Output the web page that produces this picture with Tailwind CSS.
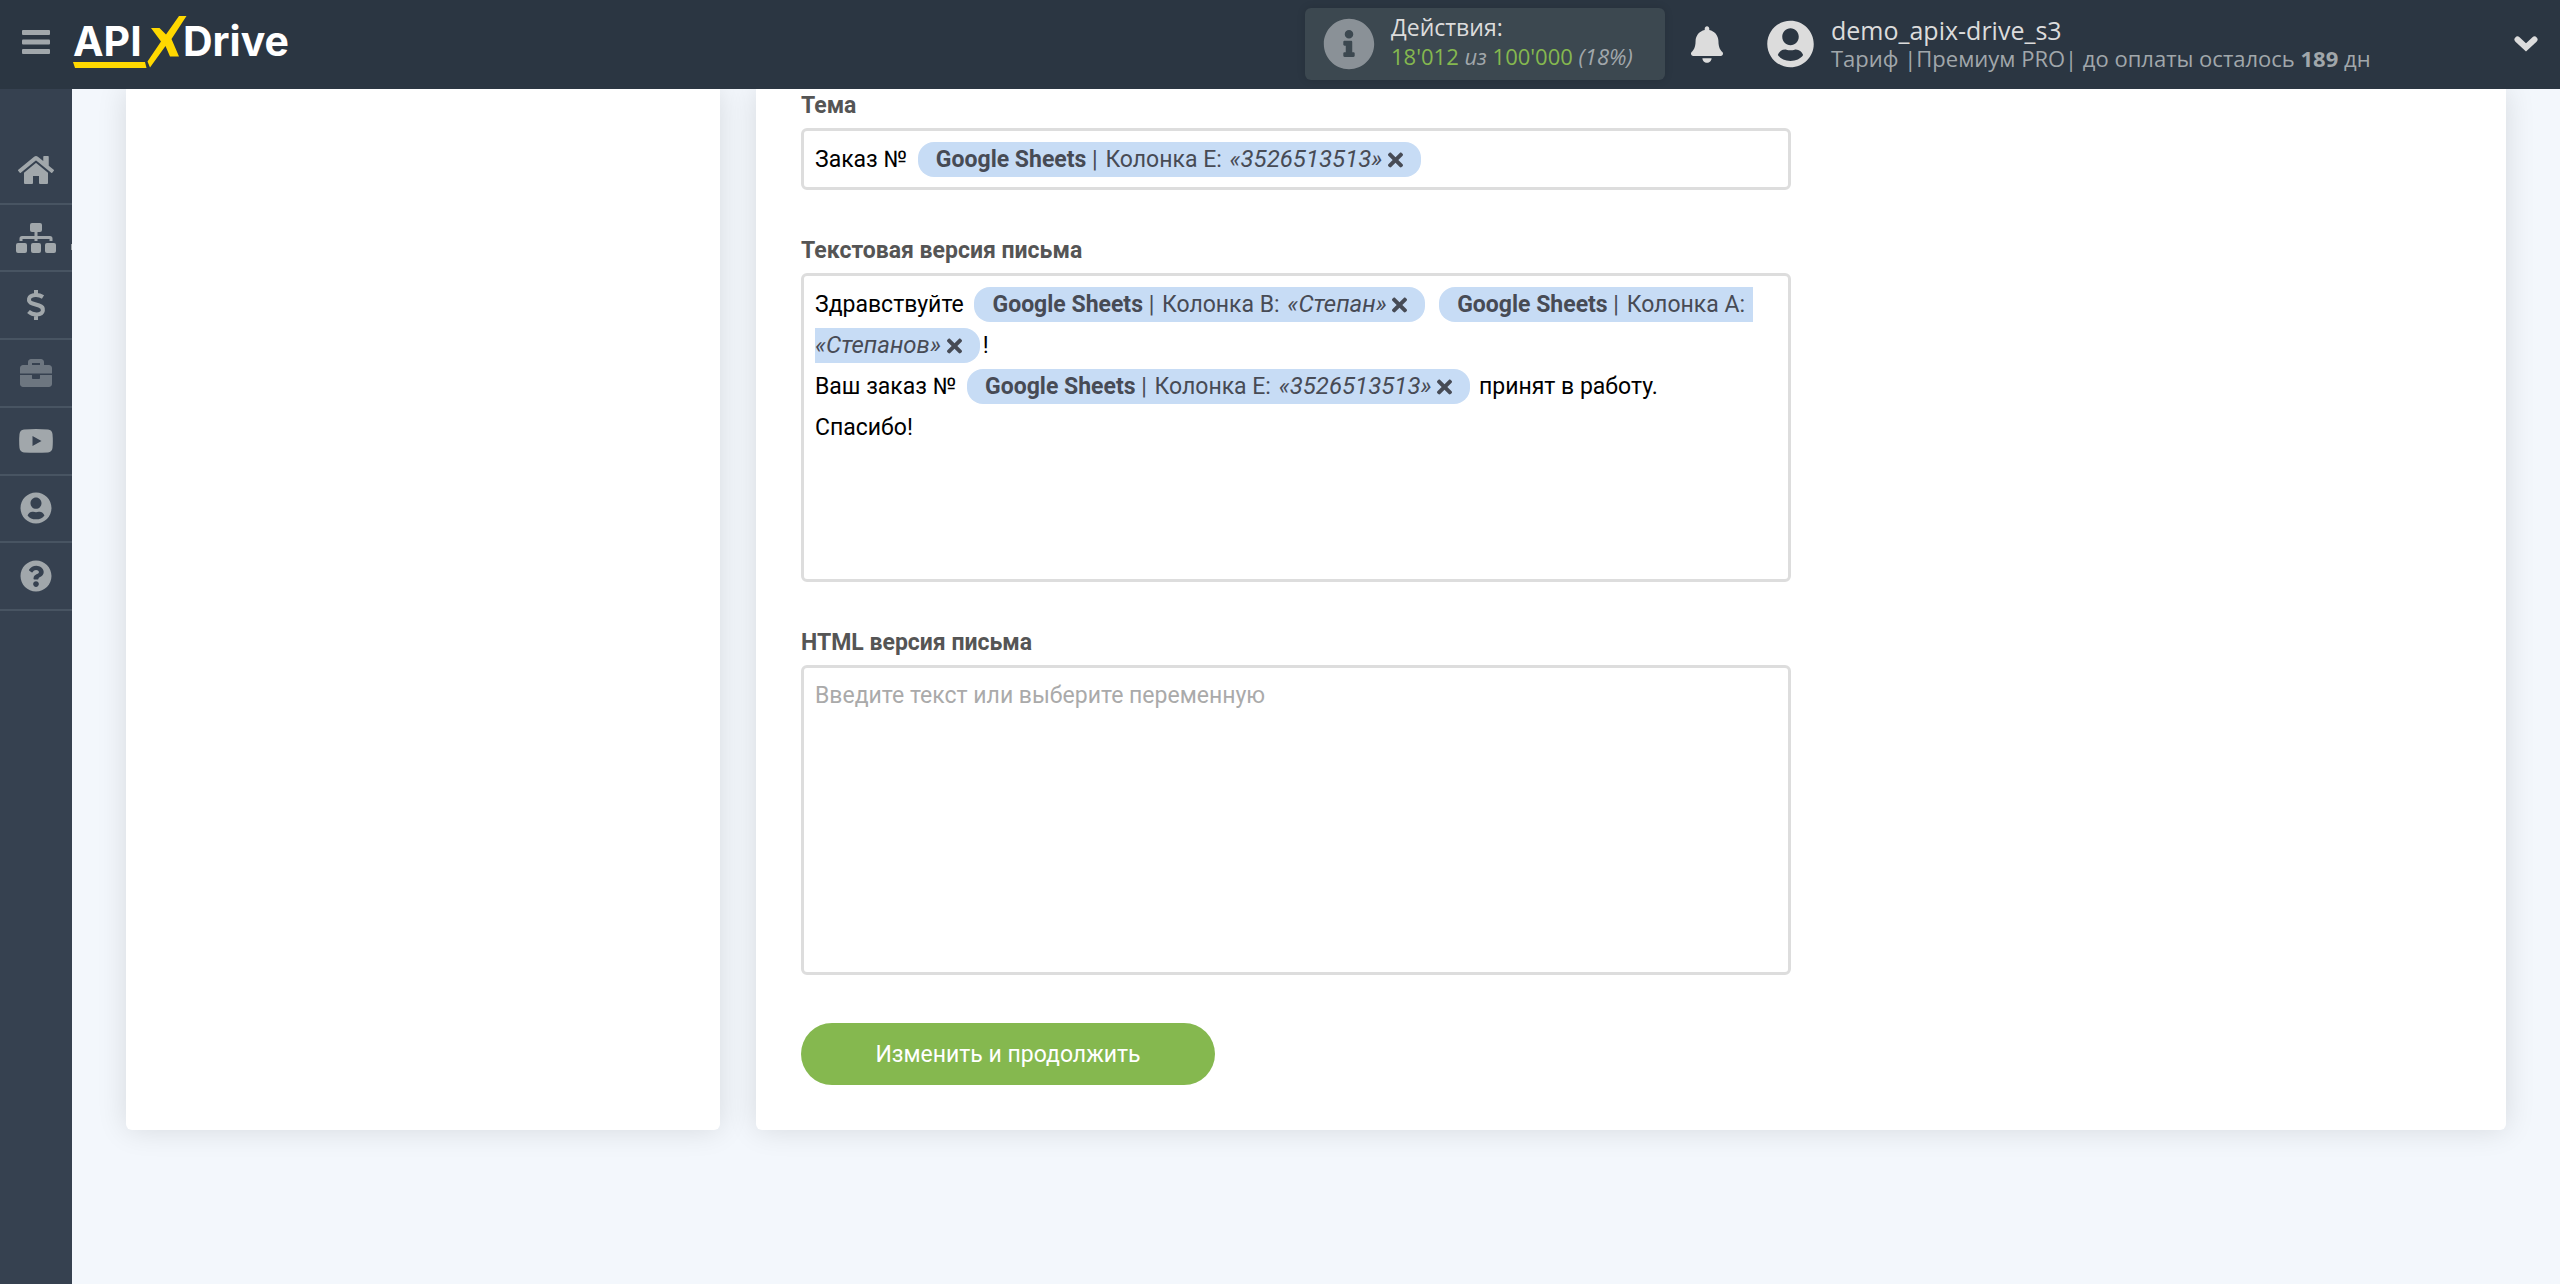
<!DOCTYPE html>
<html lang="ru">
<head>
<meta charset="utf-8">
<meta name="viewport" content="width=device-width, initial-scale=1">
<title>ApiX-Drive</title>
<script src="https://cdn.jsdelivr.net/npm/@tailwindcss/browser@4"></script>
</head>
<body class="flex min-h-screen flex-col bg-[#f3f7fc] font-[Roboto,sans-serif] text-[23px] text-black">

<!-- Icon sprite -->
<svg class="hidden" aria-hidden="true">
  <symbol id="times" viewBox="0 0 352 512"><path d="M242.72 256l100.07-100.07c12.28-12.28 12.28-32.19 0-44.48l-22.24-22.24c-12.28-12.28-32.19-12.28-44.48 0L176 189.28 75.93 89.21c-12.28-12.28-32.19-12.28-44.48 0L9.21 111.45c-12.28 12.28-12.28 32.19 0 44.48L109.28 256 9.21 356.07c-12.28 12.28-12.28 32.19 0 44.48l22.24 22.24c12.28 12.28 32.2 12.28 44.48 0L176 322.72l100.07 100.07c12.28 12.28 32.2 12.28 44.48 0l22.24-22.24c12.28-12.28 12.28-32.19 0-44.48L242.72 256z"/></symbol>
  <symbol id="user" viewBox="0 0 496 512"><path d="M248 8C111 8 0 119 0 256s111 248 248 248 248-111 248-248S385 8 248 8zm0 80c48.600 0 88 41.400 88 90s-39.400 90-88 90-88-41.400-88-90 39.400-90 88-90zm0 348c-58.700 0-106-20-135-62 14-38 42-60 78-60 5 0 10 1 14 2 13 4.200 28.700 6 43 6s30-1.800 43-6c4-1 9-2 14-2 36 0 64 22 78 60-29 42-76.300 62-135 62z"/></symbol>
</svg>

<header class="z-10 flex h-[89px] shrink-0 items-center bg-[#2b3642] pb-px font-['Open_Sans','Noto_Sans',sans-serif]">
  <button class="flex w-[72px] shrink-0 justify-center pb-1" aria-label="Меню">
    <svg class="h-6 w-7 fill-[#a1a7ab]" viewBox="0 0 28 24"><rect width="28" height="5" rx="1"/><rect y="9.500" width="28" height="5" rx="1"/><rect y="19" width="28" height="5" rx="1"/></svg>
  </button>
  <a href="#" class="shrink-0" aria-label="APIXDrive">
    <svg class="h-[88px] w-[224px]" viewBox="72 0 224 88">
      <g class="fill-white font-[Inter,sans-serif] text-[41px] font-bold"><text x="73" y="56">API</text><text x="183" y="56">Drive</text></g>
      <g class="fill-[#ffd800]"><path d="M73 62H145L146.500 68H75Z"/><path d="M179 16H186.500L171.500 39L179 56.500H170L165.500 46L150 67.500L147.500 61.500L161 41.500L151 28H159.500L166 34.500Z"/></g>
    </svg>
  </a>

  <div class="ml-auto flex h-[72px] w-[360px] shrink-0 items-center rounded-md bg-[#3c4850] pl-[18px] shadow-[0_0_8px_rgba(0,0,0,0.12)]">
    <svg class="size-[52px] fill-[#8a9197]" viewBox="0 0 512 512"><path d="M256 8C119.043 8 8 119.083 8 256c0 136.997 111.043 248 248 248s248-111.003 248-248C504 119.083 392.957 8 256 8zm0 110c23.196 0 42 18.804 42 42s-18.804 42-42 42-42-18.804-42-42 18.804-42 42-42zm56 254c0 6.627-5.373 12-12 12h-88c-6.627 0-12-5.373-12-12v-24c0-6.627 5.373-12 12-12h12v-64h-12c-6.627 0-12-5.373-12-12v-24c0-6.627 5.373-12 12-12h64c6.627 0 12 5.373 12 12v100h12c6.627 0 12 5.373 12 12v24z"/></svg>
    <div class="ml-4 pb-1 leading-[29px]">
      <div class="text-[23px] text-[#dcdcdc]">Действия:</div>
      <div class="text-[22px] whitespace-nowrap text-[#a1a7ab]"><span class="text-[#85b84f]">18'012</span> <i>из</i> <span class="text-[#85b84f]">100'000</span> <i>(18%)</i></div>
    </div>
  </div>

  <button class="ml-[26px] shrink-0" aria-label="Уведомления">
    <svg class="h-[37px] w-8 fill-[#dcdcdc]" viewBox="0 0 448 512"><path d="M224 512c35.320 0 63.970-28.650 63.970-64H160.030c0 35.350 28.650 64 63.970 64zm215.390-149.710c-19.320-20.760-55.470-51.990-55.470-154.290 0-77.700-54.480-139.900-127.940-155.160V32c0-17.670-14.320-32-31.980-32s-31.980 14.330-31.980 32v20.840C118.560 68.100 64.080 130.300 64.080 208c0 102.300-36.150 133.530-55.470 154.290-6 6.450-8.660 14.160-8.610 21.710.11 16.400 12.980 32 32.100 32h383.800c19.120 0 32-15.600 32.100-32 .05-7.550-2.610-15.270-8.610-21.710z"/></svg>
  </button>

  <button class="ml-11 flex w-[793px] shrink-0 items-center pr-[22px] text-left">
    <svg class="h-12 w-[47px] fill-[#dcdcdc]"><use href="#user"/></svg>
    <span class="ml-[17px] block whitespace-nowrap">
      <span class="block text-[25px] leading-7 text-[#dcdcdc]">demo_apix-drive_s3</span>
      <span class="block text-[22px] leading-7 text-[#a1a7ab]">Тариф |Премиум PRO| до оплаты осталось <b>189</b> дн</span>
    </span>
    <svg class="ml-auto h-4 w-6" viewBox="0 0 24 16" fill="none" stroke="#dcdcdc" stroke-width="6" stroke-linecap="round"><path d="M3.500 3.500L12 11.500L20.500 3.500"/></svg>
  </button>
</header>

<div class="flex flex-1">
  <nav class="relative w-[72px] shrink-0 bg-[#364150] pt-12" aria-label="Разделы">
    <ul class="grid h-[474px] auto-rows-fr fill-[#a1a7ab] *:border-b-2 *:border-[#485462]">
      <li><a href="#" class="flex h-full items-center justify-center" aria-label="Главная"><svg class="h-8 w-9" viewBox="0 0 576 512"><path d="M280.370 148.260L96 300.110V464a16 16 0 0 0 16 16h112a16 16 0 0 0 16-16V352h96v112a16 16 0 0 0 16 16h112a16 16 0 0 0 16-16V300L295.670 148.260a12.190 12.190 0 0 0-15.300 0zM571.600 251.470L492 186V44a12 12 0 0 0-12-12h-64a12 12 0 0 0-12 12v68L318.470 43a48 48 0 0 0-61 0L4.340 251.470a12 12 0 0 0-1.600 16.900l25.500 31A12 12 0 0 0 45.150 301l235.220-193.740a12.190 12.190 0 0 1 15.300 0L530.900 301a12 12 0 0 0 16.900-1.600l25.500-31a12 12 0 0 0-1.700-16.930z"/></svg></a></li>
      <li><a href="#" class="flex h-full items-center justify-center" aria-label="Связи"><svg class="h-8 w-10" viewBox="0 0 40 32"><rect x="14" y="1" width="12" height="9" rx="2"/><rect x="0" y="21" width="11" height="10" rx="2"/><rect x="15" y="21" width="10" height="10" rx="2"/><rect x="29" y="21" width="11" height="10" rx="2"/><path d="M18.500 9H21.500V14H34Q36.500 14 36.500 16.500V19H33.500V17H21.500V19H18.500V17H6.500V19H3.500V16.500Q3.500 14 6 14H18.500Z"/></svg></a></li>
      <li><a href="#" class="flex h-full items-center justify-center" aria-label="Оплата"><svg class="h-8 w-5" viewBox="0 0 20 32" fill="none" stroke="#a1a7ab" stroke-width="4"><path d="M17 8Q13.500 5.800 9.500 6C1.800 6.300 1 13 6.500 14.500L13 16.500C19 18.500 18 25 11 25.500Q6 25.700 2.500 22.500M10 1V7M10 25V31"/></svg></a></li>
      <li><a href="#" class="flex h-full items-center justify-center fill-[#6d7680]" aria-label="Проекты"><svg class="h-8 w-8" viewBox="0 0 512 512"><path d="M320 336c0 8.840-7.160 16-16 16h-96c-8.840 0-16-7.160-16-16v-48H0v144c0 25.600 22.400 48 48 48h416c25.600 0 48-22.400 48-48V288H320v48zm144-208h-80V80c0-25.600-22.400-48-48-48H176c-25.600 0-48 22.400-48 48v48H48c-25.600 0-48 22.400-48 48v88h512v-88c0-25.600-22.400-48-48-48zm-144 0H192V96h128v32z"/></svg></a></li>
      <li><a href="#" class="flex h-full items-center justify-center" aria-label="Видео"><svg class="h-6 w-[34px]" viewBox="0 0 34 24"><path fill-rule="evenodd" d="M5 .6Q17-.4 29 .6Q33 1 33.500 5Q34.200 12 33.500 19Q33 23 29 23.400Q17 24.300 5 23.400Q1 23 .5 19Q-.2 12 .5 5Q1 1 5 .6ZM13.500 7V17L22.500 12Z"/></svg></a></li>
      <li><a href="#" class="flex h-full items-center justify-center" aria-label="Профиль"><svg class="size-8"><use href="#user"/></svg></a></li>
      <li><a href="#" class="flex h-full items-center justify-center" aria-label="Помощь"><svg class="size-8" viewBox="0 0 512 512"><path d="M504 256c0 136.997-111.043 248-248 248S8 392.997 8 256C8 119.083 119.043 8 256 8s248 111.083 248 248zM262.655 90c-54.497 0-89.255 22.957-116.549 63.758-3.536 5.286-2.353 12.415 2.715 16.258l34.699 26.310c5.205 3.947 12.621 3.008 16.665-2.122 17.864-22.658 30.113-35.797 57.303-35.797 20.429 0 45.698 13.148 45.698 32.958 0 14.976-12.363 22.667-32.534 33.976C247.128 238.528 216 254.941 216 296v4c0 6.627 5.373 12 12 12h56c6.627 0 12-5.373 12-12v-1.333c0-28.462 83.186-29.647 83.186-106.667 0-58.002-60.165-102-116.531-102zM256 338c-25.365 0-46 20.635-46 46 0 25.364 20.635 46 46 46s46-20.636 46-46c0-25.365-20.635-46-46-46z"/></svg></a></li>
    </ul>
    <span class="absolute top-[155px] right-0 h-1.5 w-px bg-[#a1a7ab]"></span>
  </nav>

  <main class="flex flex-1 items-stretch gap-9 self-start pr-[54px] pl-[54px]">
    <aside class="w-[594px] shrink-0 rounded-b-md bg-white shadow-[0_0_30px_rgba(0,0,0,0.12)]"></aside>
    <form class="flex-1 rounded-b-md bg-white px-[45px] pb-[45px] shadow-[0_0_30px_rgba(0,0,0,0.12)]">
      <div class="flex max-w-[990px] flex-col gap-11">
        <div>
          <div id="subject-label" class="mb-1.5 leading-[33px] font-bold text-[#555]">Тема</div>
          <div role="textbox" aria-labelledby="subject-label" contenteditable="true" class="min-h-[62px] rounded-md border-3 border-[#ddd] px-[11px] pt-2 pb-1.5 leading-[41px]">Заказ № <span contenteditable="false" class="mr-[3px] ml-[5px] rounded-2xl bg-[#c7dcf5] px-[18px] py-1 text-[#474b55]"><b>Google Sheets</b> | <span class="mx-0.5">Колонка E:</span> <i class="text-[24px]">«3526513513»</i> <button type="button" class="align-[-4px]" aria-label="Удалить"><svg class="h-[22px] w-[15px] fill-current"><use href="#times"/></svg></button></span></div>
        </div>
        <div>
          <div id="text-label" class="mb-1.5 leading-[33px] font-bold text-[#555]">Текстовая версия письма</div>
          <div role="textbox" aria-multiline="true" aria-labelledby="text-label" contenteditable="true" class="min-h-[309px] rounded-md border-3 border-[#ddd] px-[11px] pt-2 pb-1.5 leading-[41px]">Здравствуйте <span contenteditable="false" class="mr-[3px] ml-[5px] rounded-2xl bg-[#c7dcf5] px-[18px] py-1 text-[#474b55]"><b>Google Sheets</b> | <span class="mx-0.5">Колонка B:</span> <i class="text-[24px]">«Степан»</i> <button type="button" class="align-[-4px]" aria-label="Удалить"><svg class="h-[22px] w-[15px] fill-current"><use href="#times"/></svg></button></span> <span contenteditable="false" class="mr-[3px] ml-[5px] rounded-2xl bg-[#c7dcf5] px-[18px] py-1 text-[#474b55]"><b>Google Sheets</b> | <span class="mr-2 ml-0.5">Колонка A:</span> <i class="text-[24px]">«Степанов»</i> <button type="button" class="align-[-4px]" aria-label="Удалить"><svg class="h-[22px] w-[15px] fill-current"><use href="#times"/></svg></button></span>!<br>Ваш заказ № <span contenteditable="false" class="mr-[3px] ml-[5px] rounded-2xl bg-[#c7dcf5] px-[18px] py-1 text-[#474b55]"><b>Google Sheets</b> | <span class="mx-0.5">Колонка E:</span> <i class="text-[24px]">«3526513513»</i> <button type="button" class="align-[-4px]" aria-label="Удалить"><svg class="h-[22px] w-[15px] fill-current"><use href="#times"/></svg></button></span> принят в работу.<br>Спасибо!</div>
        </div>
        <div>
          <label for="html-body" class="mb-1.5 block leading-[33px] font-bold text-[#555]">HTML версия письма</label>
          <textarea id="html-body" class="block h-[310px] w-full resize-none rounded-md border-3 border-[#ddd] px-[11px] py-[7px] leading-[41px] placeholder:text-[#aaa]" placeholder="Введите текст или выберите переменную"></textarea>
        </div>
      </div>
      <button type="submit" class="mt-12 block h-[62px] w-[414px] rounded-full bg-[#85b84f] pt-0.5 text-white">Изменить и продолжить</button>
    </form>
  </main>
</div>
</body>
</html>
